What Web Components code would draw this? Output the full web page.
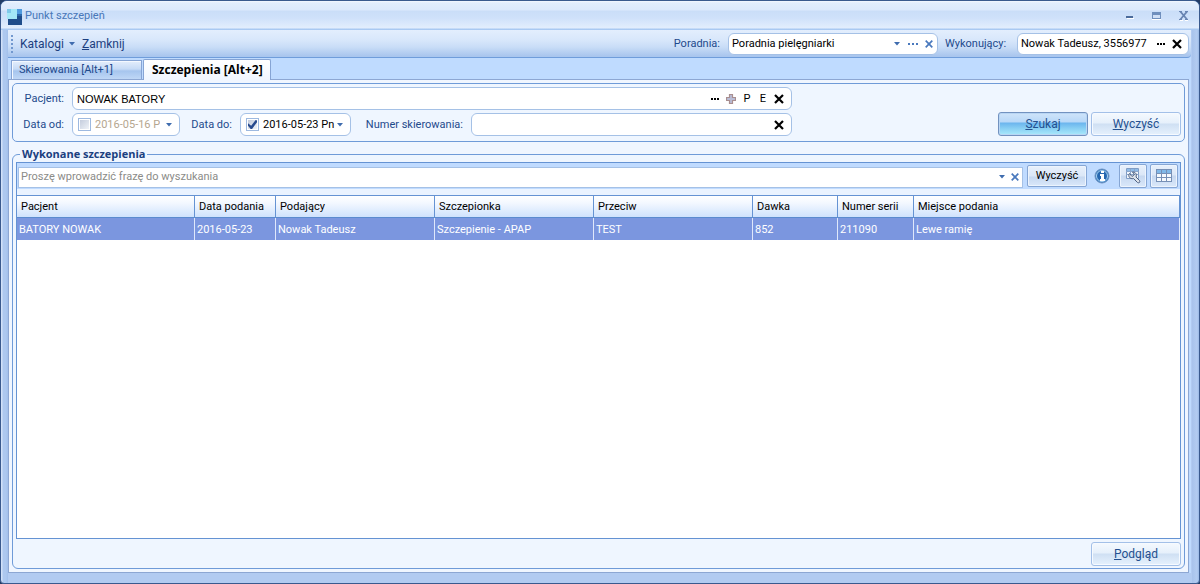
<!DOCTYPE html>
<html lang="pl">
<head>
<meta charset="utf-8">
<title>Punkt szczepień</title>
<style>
html { background: #233c66; }
body { margin: 0; min-height: 100vh; display: flex; font: 11px/14px Roboto, "Liberation Sans", sans-serif; color: #1e4a8c; }
app-window { flex: 1; min-width: 0; }
</style>
</head>
<body>
<app-window>
  <span slot="title">Punkt szczepień</span>
  <tool-bar slot="toolbar">
    <menu-link menu>Katalogi</menu-link>
    <menu-link key="Z">amknij</menu-link>
    <form-field slot="end" kind="select" label="Poradnia:" value="Poradnia pielęgniarki" tools="dots-blue x-blue" style="--w:210px;--pr:0px"></form-field>
    <form-field slot="end" label="Wykonujący:" value="Nowak Tadeusz, 3556977" tools="dots x" style="--w:172px;--lw:64px"></form-field>
  </tool-bar>
  <tab-strip slot="tabs"></tab-strip>
  <filter-panel></filter-panel>
  <group-box label="Wykonane szczepienia">
    <result-view>
      <search-bar slot="search"></search-bar>
      <data-grid></data-grid>
    </result-view>
    <push-button slot="footer" key="P">odgląd</push-button>
  </group-box>
</app-window>

<script>
const GLYPHS = {
  down: '<svg width="6" height="4" viewBox="0 0 6 4"><path d="M0 0h6L3 3.4z" fill="#3f6cae"/></svg>',
  dots: '<svg width="9" height="2" viewBox="0 0 9 2"><path d="M0 0h2v2H0zM3 0h2v2H3zM6 0h2v2H6z" fill="#000" shape-rendering="crispEdges"/></svg>',
  'dots-blue': '<svg width="11" height="2" viewBox="0 0 11 2"><path d="M0 0h2v2H0zM4 0h2v2H4zM8 0h2v2H8z" fill="#4a79bd" shape-rendering="crispEdges"/></svg>',
  x: '<svg width="10" height="10" viewBox="0 0 10 10"><path d="M1 1l8 8M9 1L1 9" stroke="#000" stroke-width="2.2"/></svg>',
  'x-blue': '<svg width="8" height="8" viewBox="0 0 8 8"><path d="M.7.7l6.6 6.6M7.3.7L.7 7.3" stroke="#4a79bd" stroke-width="1.7"/></svg>',
  plus: '<svg width="10" height="10" viewBox="0 0 10 10"><path d="M3.500.5h3v3h3v3h-3v3h-3v-3h-3v-3h3z" fill="#b9bdd6" stroke="#a98f90" stroke-width="1.200"/></svg>',
  p: 'P', e: 'E'
};
const NAMES = { down: 'Rozwiń', dots: 'Wybierz', 'dots-blue': 'Wybierz', x: 'Wyczyść', 'x-blue': 'Wyczyść', plus: 'Dodaj', p: 'P', e: 'E' };
const tool = n => `<button type="button" class="tool" aria-label="${NAMES[n]}">${GLYPHS[n]}</button>`;
const BASE = `<style>
  *, ::before, ::after { box-sizing: border-box; }
  button, input, select { font: inherit; color: inherit; margin: 0; padding: 0; border: 0; background: none; min-width: 0; }
  svg { display: block; flex: none; }
  .tool { flex: none; width: 16px; height: 18px; display: grid; place-items: center; color: #000; }
</style>`;

function define(name, render) {
  customElements.define(name, class extends HTMLElement {
    constructor() { super(); this.attachShadow({ mode: 'open' }); }
    connectedCallback() { this.shadowRoot.innerHTML = BASE + render(this); }
  });
}

define('app-window', () => `<style>
  :host { display: flex; flex-direction: column; box-sizing: border-box; border: 1px solid #3a5a8e; border-radius: 7px 7px 4px 4px; overflow: hidden;
    background: linear-gradient(90deg, #d2e1f8 0 1px, #adc8ef 2px 5px, #a2bfea 7px, transparent 7px calc(100% - 7px), #a8c3ec calc(100% - 7px), #b3ccf1 calc(100% - 2px), #9ab9e6), #b2cbf1; }
  header { flex: none; height: 29px; padding: 0 3px 0 5px; display: flex; align-items: center; gap: 2px; color: #4877b8;
    background: linear-gradient(#f4f8fe, #e2edfd 2px, #dce9fc 9px, #cadef8 10px, #cfe1fa 17px, #e2eefd 27px, #a9c9f2 28px); }
  .logo { margin-top: 1px; }
  .title { flex: 1; margin-top: 1px; }
  .ctl { width: 25px; height: 20px; display: grid; place-items: center; }
  .client { flex: 1; margin: 0 8px 10px 7px; display: flex; flex-direction: column; background: #bfdbff; }
  .page { flex: 1; display: flex; flex-direction: column; gap: 5px; padding: 3px; margin-right: 2px; border: 1px solid #8da7d3; background: #f0f6ff; }
  ::slotted(group-box) { flex: 1; }
</style>
<header>
  <svg class="logo" width="17" height="17" viewBox="0 0 17 17"><path d="M2 5h14v12H2z" fill="#1f4d8b"/><path d="M11 1h5v5h-5z" fill="#4f9ade"/><path d="M11 6h5v2h-5z" fill="#2b66aa"/><path d="M1 1h10v10H1z" fill="#a3e7f6"/><path d="M1 1h4v4H1z" fill="#7fc9ea"/></svg>
  <span class="title"><slot name="title"></slot></span>
  <button class="ctl" aria-label="Minimalizuj"><svg width="8" height="9" viewBox="0 0 8 9" shape-rendering="crispEdges"><path d="M0 5h7v2H0z" fill="#4b6b9b"/><path d="M1 7h7v1H1z" fill="#fff"/></svg></button>
  <button class="ctl" aria-label="Maksymalizuj"><svg width="10" height="8" viewBox="0 0 10 8" shape-rendering="crispEdges"><path d="M0 0h9v7H0z" fill="#6f8fbd"/><path d="M1 3h7v3H1z" fill="#cfdff5"/><path d="M0 7h9v1H0z" fill="#fff"/></svg></button>
  <button class="ctl" aria-label="Zamknij"><svg width="10" height="10" viewBox="0 0 10 10"><path d="M1 9.5h3M6 9.5h3" stroke="#fff"/><path d="M1.3.5l6.8 8M8.1.5l-6.8 8" stroke="#6985b2" stroke-width="1.8"/><path d="M0 .5h3M6 .5h3M0 8.5h3M6 8.5h3" stroke="#6985b2"/></svg></button>
</header>
<main class="client"><slot name="toolbar"></slot><slot name="tabs"></slot><div class="page"><slot></slot></div></main>`);

define('tool-bar', () => `<style>
  :host { display: flex; align-items: center; height: 28px; box-sizing: border-box; padding: 0 2px 0 3px; border-radius: 0 0 4px 0; border-bottom: 1px solid #6f9ddb;
    background: linear-gradient(#e3eefd, #d8e7fb 10px, #c9ddf7 17px, #a9c6ee 26px); }
  .grip { width: 2px; height: 18px; margin-right: 7px; background: repeating-linear-gradient(#7198cf 0 2px, transparent 2px 4px); }
  nav { display: flex; gap: 7px; font-size: 12px; }
  .end { margin-left: auto; display: flex; gap: 7px; }
</style><span class="grip"></span><nav><slot></slot></nav><div class="end"><slot name="end"></slot></div>`);

define('menu-link', el => `<style>
  :host { display: block; color: #1c3f80; }
  button { display: flex; align-items: center; }
  svg { margin-left: 5px; }
</style><button type="button"><u>${el.getAttribute('key') || ''}</u><slot></slot>${el.hasAttribute('menu') ? GLYPHS.down : ''}</button>`);

define('tab-strip', () => `<style>
  :host { display: flex; align-items: flex-end; height: 22px; padding: 0 3px; gap: 1px; box-sizing: border-box; margin-bottom: -1px; }
  button { text-align: left; border: 1px solid #86a4d4; }
  .off { width: 131px; height: 19px; margin-bottom: 1px; padding-left: 7px; color: #1e4a8c; border-bottom: 0; box-shadow: inset 1px 1px #f4f8ff;
    background: linear-gradient(#e4eefc, #c7dbf6 8px, #a6c5ee 10px, #bfd7f6); }
  .on { position: relative; height: 21px; width: 128px; padding-left: 8px; white-space: nowrap; color: #000; font: bold 12px/14px "Open Sans", sans-serif; border-bottom: 0; border-radius: 2px 2px 0 0; background: linear-gradient(#fff, #f0f6ff); }
</style><button class="off" type="button">Skierowania [Alt+1]</button><button class="on" type="button">Szczepienia [Alt+2]</button>`);

const FIELD = `<style>
  label { white-space: nowrap; flex: none; }
  .box { display: flex; align-items: center; height: 23px; padding: 0 4px; border: 1px solid #a5c1e6; border-radius: 6px; background: #fff; color: #000; min-width: 0; }
  .box input:not([type]), .box select { flex: 1; }
  input[type=checkbox] { appearance: none; flex: none; width: 13px; height: 13px; margin: 0 4px 0 1px; border: 1px solid #9db9e0; outline: 1px solid #fff; outline-offset: -2px;
    background: linear-gradient(135deg, #bfc8da, #f4f7fb); display: grid; place-items: center; }
  input[type=checkbox]:checked::before { content: ""; width: 9px; height: 9px; background: #294b8e; clip-path: polygon(0 35%, 35% 65%, 85% 0, 100% 5%, 100% 25%, 45% 100%, 30% 100%, 0 65%); }
</style>`;

define('form-field', el => {
  const v = el.getAttribute('value') || '';
  const tools = (el.getAttribute('tools') || '').split(' ').filter(Boolean).map(tool).join('');
  const ctl = el.getAttribute('kind') === 'select'
    ? `<select id="f"><option>${v}</option></select><span class="arrow">${GLYPHS.down}</span>`
    : `<input id="f" value="${v}">`;
  return FIELD + `<style>
  :host { display: flex; align-items: center; gap: 8px; min-width: 0; }
  label { min-width: var(--lw, 0); }
  .box { width: var(--w); height: 22px; padding: 0 var(--pr, 3px) 0 3px; }
  select { appearance: none; }
  .arrow { margin-right: 5px; pointer-events: none; }
</style><label for="f">${el.getAttribute('label')}</label><div class="box">${ctl}${tools}</div>`;
});

define('push-button', el => `<style>
  :host { display: block; width: 90px; }
  button { width: 100%; height: 24px; border: 1px solid #a3c0e8; border-radius: 3px; box-shadow: inset 0 0 0 1px #f6faff; color: #24508f; font-size: 12px;
    background: linear-gradient(#f5f9fe, #e6f0fb 10px, #cfe0f3 11px, #e6f1fd); }
  :host([primary]) button { border-color: #7292c0; box-shadow: inset 0 0 0 1px #b9d6f4; background: linear-gradient(#cfe4fa, #b8d8f8 9px, #6bb5ee 10px, #86cdf3 15px, #aaeafb); }
</style><button type="button"><u>${el.getAttribute('key')}</u><slot></slot></button>`);

define('filter-panel', () => FIELD + `<style>
  :host { display: block; border: 1px solid #6f9bd8; border-radius: 5px; padding: 3px 3px 5px; background: #eff6ff; }
  form { display: flex; align-items: flex-end; justify-content: space-between; gap: 12px; }
  .fields { flex: 0 1 776px; display: grid; gap: 3px; min-width: 0; }
  .row { display: flex; align-items: center; }
  label { margin-right: 8px; text-align: right; }
  .first { width: 48px; }
  .to { width: 52px; }
  .no { width: 112px; }
  .grow { flex: 1; }
  .grow input { font-family: "Liberation Sans", sans-serif; }
  .od { width: 108px; color: #b5a68f; }
  .od input:not([type]) { margin-right: 6px; }
  .do { width: 111px; }
  .date .tool { width: 6px; margin-right: 3px; }
  .buttons { display: flex; gap: 3px; }
</style>
<form>
  <div class="fields">
    <div class="row"><label class="first" for="p">Pacjent:</label>
      <div class="box grow"><input id="p" value="NOWAK BATORY">${['dots', 'plus', 'p', 'e', 'x'].map(tool).join('')}</div></div>
    <div class="row">
      <label class="first" for="od">Data od:</label><div class="box date od"><input type="checkbox" aria-label="Data od aktywna"><input id="od" value="2016-05-16 Pn">${tool('down')}</div>
      <label class="to" for="do">Data do:</label><div class="box date do"><input type="checkbox" checked aria-label="Data do aktywna"><input id="do" value="2016-05-23 Pn">${tool('down')}</div>
      <label class="no" for="nr">Numer skierowania:</label><div class="box grow"><input id="nr">${tool('x')}</div>
    </div>
  </div>
  <div class="buttons"><push-button primary key="S">zukaj</push-button><push-button key="W">yczyść</push-button></div>
</form>`);

define('group-box', el => `<style>
  :host { display: flex; min-width: 0; }
  fieldset { flex: 1; min-width: 0; margin: 0; display: flex; flex-direction: column; gap: 3px; padding: 1px 3px 2px; border: 1px solid #6f9bd8; border-radius: 6px; background: #eff6ff; }
  legend { margin-left: 4px; padding: 0 2px; font: bold 11px/14px "Open Sans", sans-serif; color: #1a4080; }
  .body { flex: 1; display: flex; }
  footer { display: flex; justify-content: flex-end; }
</style><fieldset><legend>${el.getAttribute('label')}</legend><div class="body"><slot></slot></div><footer><slot name="footer"></slot></footer></fieldset>`);

define('result-view', () => `<style>
  :host { flex: 1; min-width: 0; display: flex; flex-direction: column; border: 1px solid #6593d3; background: #fff; }
</style><slot name="search"></slot><slot></slot>`);

define('search-bar', () => `<style>
  :host { display: block; padding-bottom: 6px; background: #eaf3ff; }
  form { display: flex; align-items: center; height: 26px; padding: 0 2px 0 1px; background: #c0dbff; }
  .box { flex: 1; display: flex; align-items: center; height: 21px; margin: 2px 4px 0 0; border: 1px solid #a5c1e6; background: #fff; }
  .box input { flex: 1; padding-left: 2px; }
  input::placeholder { color: #8b8b88; opacity: 1; }
  .box .tool { width: 13px; }
  .box .tool:last-child { margin-right: 1px; }
  .btn { height: 22px; width: 60px; border: 1px solid #86a6d4; border-radius: 2px; color: #000; box-shadow: inset 0 0 0 1px #edf4fd; background: linear-gradient(#e8f0fb, #dbe7f7 10px, #c6d8f0 11px, #dae8fa); display: grid; place-items: center; }
  .icon { width: 28px; height: 24px; margin-left: 3px; }
  .info { width: 16px; height: 16px; margin: 0 6px 0 7px; }
</style>
<form>
  <div class="box"><input aria-label="Szukana fraza" placeholder="Proszę wprowadzić frazę do wyszukania">${tool('down')}${tool('x-blue')}</div>
  <button type="button" class="btn">Wyczyść</button>
  <button type="button" class="info" aria-label="Informacja"><svg width="16" height="16" viewBox="0 0 16 16"><circle cx="8" cy="8" r="7" fill="#3379bd" stroke="#6f93c2"/><circle cx="8" cy="8" r="5.500" fill="#2566b0" stroke="#a9d2f2"/><path d="M7 3h3v2H7zM6 6h4v5h1v2H6v-2h1V8H6z" fill="#fff"/></svg></button>
  <button type="button" class="btn icon" aria-label="Konfiguracja tabeli"><svg width="16" height="16" viewBox="0 0 16 16"><path d="M1.5.5h12v10h-12z" fill="#f3f7fc" stroke="#7f9cc5"/><path d="M2 1h11v2H2z" fill="#8ebbe8"/><path d="M1 3.500h13M1 6.500h13M5.500 1v10M9.500 1v10" stroke="#8ca6ca"/><path d="M4.500 5.500C2.500 8 5 11.500 8.500 10.500l4 4c1.500 1 3-.5 2-2L11 9c1-3-.5-5-3.500-5L9.500 6.500 7 8.500z" fill="#dce2ea" stroke="#4b5f80"/></svg></button>
  <button type="button" class="btn icon" aria-label="Kolumny"><svg width="16" height="14" viewBox="0 0 16 14" shape-rendering="crispEdges"><path d="M0 0h16v13H0z" fill="#7790b6"/><path d="M1 1h4v3H1zM6 1h4v3H6zM11 1h4v3h-4z" fill="#80b8e8"/><path d="M1 5h4v3H1zM6 5h4v3H6zM11 5h4v3h-4zM1 9h4v3H1zM6 9h4v3H6zM11 9h4v3h-4z" fill="#f6fafe"/></svg></button>
</form>`);

define('data-grid', () => {
  const cols = [['Pacjent', 178, 'BATORY NOWAK'], ['Data podania', 81, '2016-05-23'], ['Podający', 159, 'Nowak Tadeusz'], ['Szczepionka', 159, 'Szczepienie - APAP'], ['Przeciw', 159, 'TEST'], ['Dawka', 85, '852'], ['Numer serii', 76, '211090'], ['Miejsce podania', 0, 'Lewe ramię']];
  return `<style>
  :host { display: block; flex: 1; }
  table { width: 100%; table-layout: fixed; border-collapse: separate; border-spacing: 0; white-space: nowrap; }
  th, td { overflow: hidden; text-align: left; font-weight: normal; height: 23px; padding: 1px 2px 0; border-right: 1px solid #6593d3; }
  th { padding: 1px 4px 0; color: #000; border-top: 1px solid #6593d3; border-bottom: 1px solid #5b8bcf; background: linear-gradient(#fff, #f3f8ff 7px, #cfe2fd); }
  td { height: 22px; color: #fff; background: #7b96df; border-color: #dfe8fb; }
</style><table><colgroup>${cols.map(c => c[1] ? `<col style="width:${c[1]}px">` : '<col>').join('')}</colgroup>
  <thead><tr>${cols.map(c => `<th scope="col">${c[0]}</th>`).join('')}</tr></thead>
  <tbody><tr>${cols.map(c => `<td>${c[2]}</td>`).join('')}</tr></tbody></table>`;
});
</script>
</body>
</html>
